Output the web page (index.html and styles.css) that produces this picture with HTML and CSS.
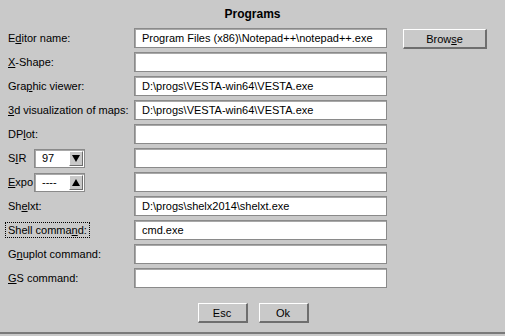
FILE: index.html
```html
<!DOCTYPE html>
<html lang="en">
<head>
  <meta charset="UTF-8">
  <title>Programs</title>
  <link rel="stylesheet" href="styles.css">
</head>
<body>
  <div class="dialog">
    <div class="title">Programs</div>

    <div class="rows">
      <label class="lbl">E<u>d</u>itor name:</label>
      <div class="field">Program Files (x86)\Notepad++\notepad++.exe</div>
      <button class="btn browse">Brow<u>s</u>e</button>

      <label class="lbl"><u>X</u>-Shape:</label>
      <div class="field"></div>
      <span></span>

      <label class="lbl">Gra<u>p</u>hic viewer:</label>
      <div class="field">D:\progs\VESTA-win64\VESTA.exe</div>
      <span></span>

      <label class="lbl"><u>3</u>d visualization of maps:</label>
      <div class="field">D:\progs\VESTA-win64\VESTA.exe</div>
      <span></span>

      <label class="lbl">DP<u>l</u>ot:</label>
      <div class="field"></div>
      <span></span>

      <div class="lbl combo-row">
        <span class="combo-lbl">S<u>I</u>R</span>
        <div class="combo">
          <span class="combo-val">97</span>
          <span class="combo-btn"><span class="tri down"></span></span>
        </div>
      </div>
      <div class="field"></div>
      <span></span>

      <div class="lbl combo-row">
        <span class="combo-lbl"><u>E</u>xpo</span>
        <div class="combo">
          <span class="combo-val">----</span>
          <span class="combo-btn"><span class="tri up"></span></span>
        </div>
      </div>
      <div class="field"></div>
      <span></span>

      <label class="lbl">Sh<u>e</u>lxt:</label>
      <div class="field">D:\progs\shelx2014\shelxt.exe</div>
      <span></span>

      <label class="lbl"><span class="focus">Shell comma<u>n</u>d:</span></label>
      <div class="field">cmd.exe</div>
      <span></span>

      <label class="lbl">G<u>n</u>uplot command:</label>
      <div class="field"></div>
      <span></span>

      <label class="lbl"><u>G</u>S command:</label>
      <div class="field"></div>
      <span></span>
    </div>

    <div class="actions">
      <button class="btn small">Esc</button>
      <button class="btn small">Ok</button>
    </div>
  </div>
</body>
</html>
```

FILE: styles.css
```css
body { margin: 0; background: #c9c9c9; font-family: "Liberation Sans", Arial, sans-serif; font-size: 11px; color: #000; }
.dialog {
  width: 505px;
  height: 334px;
  box-sizing: border-box;
  border-bottom: 2px solid #7a7a7a;
  background: #c9c9c9;
}
.title {
  height: 28px;
  line-height: 28px;
  text-align: center;
  font-weight: bold;
  font-size: 12px;
}
.rows {
  display: grid;
  grid-template-columns: 134px 253px 100px;
  grid-auto-rows: 20px;
  row-gap: 4px;
}
.lbl { padding-left: 8px; display: flex; align-items: center; white-space: nowrap; }
.focus { outline: 1px dotted #000; outline-offset: 1px; margin-left: -1px; padding: 0 1px; }
.field {
  box-sizing: border-box;
  height: 20px;
  background: #fff;
  border: 1px solid #8a8a8a;
  box-shadow: inset 1px 1px 0 #a8a8a8;
  padding-left: 7px;
  line-height: 18px;
  white-space: nowrap;
  overflow: hidden;
}
.btn {
  box-sizing: border-box;
  height: 20px;
  background: #c9c9c9;
  font: inherit;
  color: #000;
  padding: 0;
  border-top: 1px solid #fff;
  border-left: 1px solid #fff;
  border-right: 2px solid #6e6e6e;
  border-bottom: 2px solid #6e6e6e;
  cursor: pointer;
}
.browse { width: 84px; margin-left: 16px; margin-top: 1px; }
.combo-lbl { width: 26px; }
.combo {
  box-sizing: border-box;
  width: 51px;
  height: 19px;
  background: #fff;
  border: 1px solid #8a8a8a;
  box-shadow: inset 1px 1px 0 #a8a8a8;
  display: flex;
  align-items: center;
  justify-content: space-between;
  padding: 1px;
}
.combo-val { padding-left: 6px; }
.combo-btn {
  width: 14px;
  height: 15px;
  box-sizing: border-box;
  background: #c9c9c9;
  border-top: 1px solid #fff;
  border-left: 1px solid #fff;
  border-right: 1px solid #6e6e6e;
  border-bottom: 1px solid #6e6e6e;
  display: flex;
  align-items: center;
  justify-content: center;
}
.tri { width: 0; height: 0; border-left: 4px solid transparent; border-right: 4px solid transparent; }
.tri.down { border-top: 7px solid #000; }
.tri.up { border-bottom: 7px solid #000; }
.actions {
  display: flex;
  justify-content: center;
  gap: 11px;
  margin-top: 15px;
  padding-left: 1px;
}
.small { width: 50px; }
```
